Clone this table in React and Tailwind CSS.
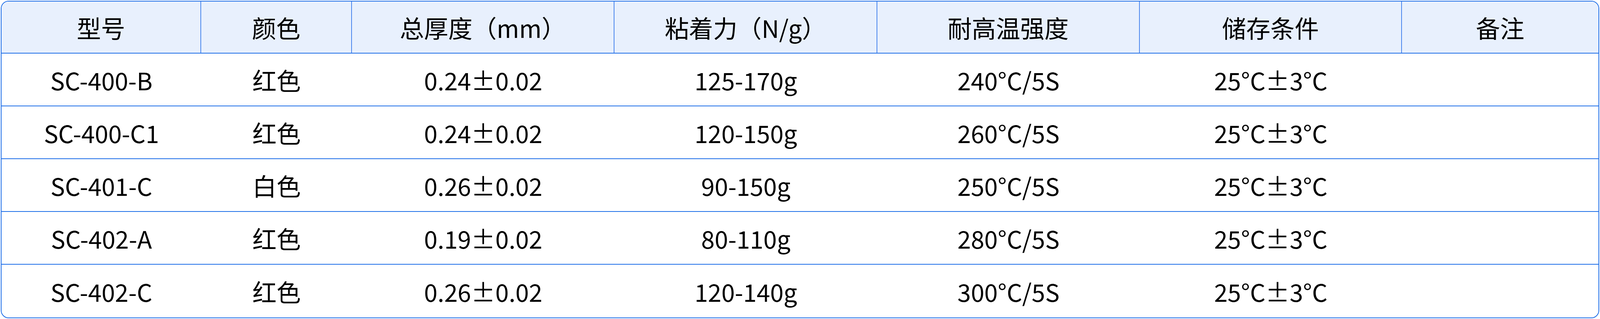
const headers = ['型号', '颜色', '总厚度（mm）', '粘着力（N/g）', '耐高温强度', '储存条件', '备注'];

const rows = [
  ['SC-400-B', '红色', '0.24±0.02', '125-170g', '240°C/5S', '25°C±3°C', ''],
  ['SC-400-C1', '红色', '0.24±0.02', '120-150g', '260°C/5S', '25°C±3°C', ''],
  ['SC-401-C', '白色', '0.26±0.02', '90-150g', '250°C/5S', '25°C±3°C', ''],
  ['SC-402-A', '红色', '0.19±0.02', '80-110g', '280°C/5S', '25°C±3°C', ''],
  ['SC-402-C', '红色', '0.26±0.02', '120-140g', '300°C/5S', '25°C±3°C', ''],
];

// 列宽按比例分配，随窗口宽度伸缩
const cols =
  'grid grid-cols-[minmax(0,590fr)_minmax(0,445fr)_minmax(0,776fr)_minmax(0,776fr)_minmax(0,776fr)_minmax(0,774fr)_minmax(0,581fr)]';

function App() {
  return (
    <div className="w-full pt-[2px] px-[2px] bg-white font-['Noto_Sans_CJK_SC','Noto_Sans',sans-serif]">
      <div className="w-full rounded-[20px] border-2 border-[#1f6fe8] overflow-hidden text-[62px] text-black leading-none">
        {/* 表头 */}
        <div className={`${cols} h-[133px] bg-[#e8f0fd] border-b-2 border-[#1f6fe8]`}>
          {headers.map((h, i) => (
            <div
              key={h}
              className={`flex items-center justify-center whitespace-nowrap ${i < headers.length - 1 ? 'border-r-2 border-[#4a86ee]' : ''}`}
            >
              {h}
            </div>
          ))}
        </div>

        {/* 数据行 */}
        {rows.map((r, ri) => (
          <div
            key={r[0]}
            className={`${cols} h-[135px] ${ri < rows.length - 1 ? 'border-b-2 border-[#1f6fe8]' : ''}`}
          >
            {r.map((c, ci) => (
              <div key={ci} className="flex items-center justify-center whitespace-nowrap">
                {c}
              </div>
            ))}
          </div>
        ))}
      </div>
    </div>
  );
}

export default App;
